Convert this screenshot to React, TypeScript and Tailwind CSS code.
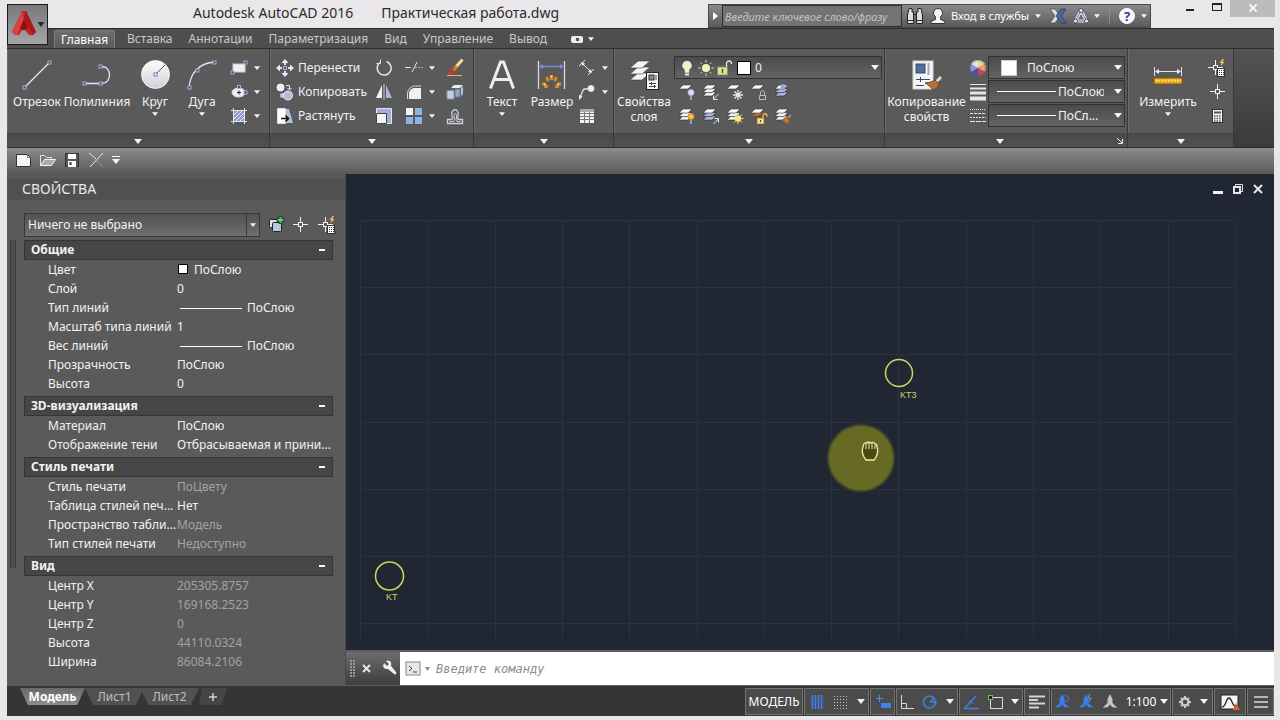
import React from 'react';

interface IIcon {
  w?: number;
  h?: number;
  children: React.ReactNode;
}

interface IRow {
  label: string;
  value: string;
  mark?: 'swatch' | 'line';
  muted?: boolean;
}

interface ISection {
  title: string;
  rows: IRow[];
}

const Icon = ({ w = 18, h = 18, children }: IIcon) => (
  <svg width={w} height={h} viewBox={`0 0 ${w} ${h}`} fill="none" stroke="#e6e6ea" className="shrink-0" aria-hidden="true">
    {children}
  </svg>
);

const Grip = ({ x, y }: { x: number; y: number }) => <rect x={x - 1.5} y={y - 1.5} width="3" height="3" fill="#4a4a55" stroke="#a9aee0" />;

const Arrow = ({ big = false }: { big?: boolean }) => (
  <svg width={big ? 8 : 6} height={big ? 5 : 4} viewBox="0 0 8 5" fill="#f4f4f4" className="shrink-0" aria-hidden="true">
    <path d="M0 0h8L4 5z" />
  </svg>
);

// stack of sheets shared by the layer tools
const Sheets = ({ n = 3, tint = '#f2f2f2' }: { n?: number; tint?: string }) => (
  <g stroke="#2c2c2c" strokeWidth="0.6">
    {n > 2 && <path d="M1 13l4-4h9l-4 4z" fill={tint} />}
    {n > 1 && <path d="M1 9.500l4-4h9l-4 4z" fill={tint} />}
    <path d="M1 6l4-4h9l-4 4z" fill="#fafafa" />
  </g>
);

const Cross = ({ x = 8, y = 8, r = 7 }: { x?: number; y?: number; r?: number }) => (
  <g stroke="#f2f2f2">
    <path d={`M${x + 0.5} ${y - r}v${r - 2}M${x + 0.5} ${y + 3}v${r - 2}M${x - r} ${y + 0.5}h${r - 2}M${x + 3} ${y + 0.5}h${r - 2}`} />
    <rect x={x - 1.5} y={y - 1.5} width="4" height="4" />
  </g>
);

const CrossCalc = () => (
  <Icon>
    <Cross x={7} y={8} r={7} />
    <path d="M14.500 0l-3 4h2l-1 3.500 4-4.500h-2l1.500-3z" fill="#f0c040" stroke="none" />
    <rect x="9.500" y="9.500" width="7" height="8" fill="#fff" stroke="#333" />
    <path d="M11 11.500h1M13 11.500h1M15 11.500h1M11 13.500h1M13 13.500h1M15 13.500h1M11 15.500h1M13 15.500h1M15 15.500h1" stroke="#333" />
  </Icon>
);

const LineIcon = () => (
  <Icon w={32} h={32}>
    <path d="M4 28L28 4" strokeWidth="1.300" />
    <Grip x={3.5} y={28.5} />
    <Grip x={28.5} y={3.5} />
  </Icon>
);

const PolylineIcon = () => (
  <Icon w={32} h={32}>
    <path d="M3 24.500h18c10 0 10-17 0-17h-2" strokeWidth="1.300" />
    <Grip x={3.5} y={24.5} />
    <Grip x={19.5} y={24.5} />
    <Grip x={19.5} y={7.5} />
  </Icon>
);

const CircleIcon = () => (
  <Icon w={32} h={32}>
    <defs>
      <linearGradient id="ball" x1="0" y1="0" x2="0" y2="1">
        <stop offset="0" stopColor="#fdfdfd" />
        <stop offset="1" stopColor="#cfd0d8" />
      </linearGradient>
    </defs>
    <circle cx="16.500" cy="15.500" r="14" fill="url(#ball)" stroke="#fff" strokeWidth="0.800" />
    <path d="M16 16L26 6" stroke="#555" />
    <rect x="15" y="14" width="3" height="3" fill="#fff" stroke="#6a78c0" />
  </Icon>
);

const ArcIcon = () => (
  <Icon w={32} h={32}>
    <path d="M3 29C4 14 13 4 29 3" strokeWidth="1.300" />
    <Grip x={3.5} y={28.5} />
    <Grip x={11.5} y={11.5} />
    <Grip x={28.5} y={3.5} />
  </Icon>
);

const RectIcon = () => (
  <Icon>
    <rect x="3" y="5" width="12" height="8" fill="#f0f0f2" stroke="#ccc" />
    <Grip x={2.5} y={13.5} />
    <Grip x={15.5} y={3.5} />
  </Icon>
);

const EllipseIcon = () => (
  <Icon>
    <ellipse cx="8.500" cy="9.500" rx="6.500" ry="4.500" fill="#eeeef2" stroke="#ddd" />
    <path d="M7 9.500h4M9 7.500v4" stroke="#222" />
    <Grip x={9} y={4} />
    <Grip x={15.5} y={9.5} />
  </Icon>
);

const HatchIcon = () => (
  <Icon>
    <rect x="4" y="4" width="10" height="10" fill="#8f9ad0" stroke="none" />
    <path d="M4 8l4-4M4 12l8-8M6 14l8-8M10 14l4-4" stroke="#e8ebff" />
    <path d="M3.500 1v16M14.500 1v16M1 3.500h16M1 14.500h16" />
  </Icon>
);

const MoveIcon = () => (
  <Icon>
    <path d="M9 0l3.500 4h-7zM9 18l3.500-4h-7zM0 9l4-3.500v7zM18 9l-4-3.500v7z" fill="#eee" stroke="none" />
    <path d="M9 3v3M9 12v3M3 9h3M12 9h3" strokeWidth="2" />
    <rect x="7.500" y="7.500" width="3" height="3" stroke="#a9aee0" />
  </Icon>
);

const CopyIcon = () => (
  <Icon>
    <circle cx="4.500" cy="4.500" r="3.500" fill="#eee" stroke="#fff" />
    <circle cx="6.500" cy="12.500" r="2.500" fill="#bfc4dd" stroke="none" />
    <circle cx="12" cy="12.500" r="4.500" fill="#b4bad8" stroke="#eee" />
    <path d="M10 2.500h3.500V6M11.500 5l2 2 2-2" />
  </Icon>
);

const StretchIcon = () => (
  <Icon>
    <path d="M1.500 1.500h8v15h-8z" fill="#fff" stroke="#ddd" />
    <path d="M10 2h3l4 14h-7z" fill="#a8c0dd" stroke="none" />
    <path d="M5 11.500h7M9.500 8.500l3 3-3 3" stroke="#111" strokeWidth="1.600" />
  </Icon>
);

const RotateIcon = () => (
  <Icon>
    <path d="M5 3.500a7 7 0 1 0 6.500-1" strokeWidth="1.500" />
    <path d="M5.500 0.500v4h-4" />
  </Icon>
);

const TrimIcon = () => (
  <Icon>
    <path d="M0 8.500h6M7 13l5-10" />
    <path d="M10 8.500h8" strokeDasharray="2 1" stroke="#aaa" />
  </Icon>
);

const EraseIcon = () => (
  <Icon>
    <path d="M16.500 0.500l-7 8" stroke="#f3dc8e" strokeWidth="3" />
    <path d="M9.500 6.500l3 2-4 4-3-2z" fill="#d9772b" stroke="none" />
    <path d="M6 9.500l3 3L4 15.500H1z" fill="#c83a2a" stroke="none" />
    <path d="M1 16.500h15" stroke="#f0b070" />
  </Icon>
);

const MirrorIcon = () => (
  <Icon>
    <path d="M7 2v13H1z" fill="#f2f2f2" stroke="none" />
    <path d="M11 2v13h6z" fill="#a9b8d4" stroke="none" />
    <path d="M9 1v16" stroke="#cfcfcf" />
  </Icon>
);

const FilletIcon = () => (
  <Icon>
    <path d="M4 16V11c0-4 3-6 6-6h6v11z" fill="#f0f0f2" stroke="none" />
    <path d="M2.500 16V11c0-5 4-8 8-8H16" stroke="#d8d8e0" />
  </Icon>
);

const ExplodeIcon = () => (
  <Icon>
    <path d="M5 5l3-3h9l-3 3z" fill="#e8eef6" stroke="none" />
    <path d="M1 7.500h7V16H1z" fill="#c2d0e4" stroke="#8090a8" />
    <path d="M9 6h5v8H9z" fill="#8fa6c8" stroke="#68788f" />
    <path d="M15 5l2-2v8l-2 2z" fill="#b4c4dc" stroke="none" />
  </Icon>
);

const ScaleIcon = () => (
  <Icon>
    <path d="M1.500 1.500h15v15h-15z" fill="#9fb0d2" stroke="#dfe4f0" />
    <path d="M1.500 6.500h10v10h-10z" fill="#f4f4f6" stroke="#444" />
  </Icon>
);

const ArrayIcon = () => (
  <Icon>
    <rect x="1" y="1" width="7" height="7" fill="#f4f4f6" stroke="none" />
    <rect x="10" y="1" width="7" height="7" fill="#8fb4e2" stroke="none" />
    <rect x="1" y="10" width="7" height="7" fill="#8fb4e2" stroke="none" />
    <rect x="10" y="10" width="7" height="7" fill="#8fb4e2" stroke="none" />
  </Icon>
);

const OffsetIcon = () => (
  <Icon>
    <path d="M1.500 16.500v-4h3.500c2 0 1.500-2 1-3-2-9 8-9 6 0-.5 1-1 3 1 3h3.500v4z" stroke="#c8d0e8" strokeWidth="1.300" />
    <path d="M3.500 14.500h4c2-2 0-4 .5-6.500.5-2 2-2 2.500 0 .5 2.500-1.500 4.500.5 6.500h3.500" stroke="#eee" strokeWidth="0.800" />
  </Icon>
);

const TextIcon = () => (
  <Icon w={30} h={32}>
    <path d="M3.500 29.500L13.500 3h3L26.500 29.500M7 20.500h16" stroke="#ededed" strokeWidth="3" />
  </Icon>
);

const DimensionIcon = () => (
  <Icon w={30} h={32}>
    <path d="M1.500 2v28M27.500 2v28" stroke="#d6d6dc" strokeWidth="1.300" />
    <path d="M3 7.500h23" stroke="#6f8fe0" strokeWidth="1.500" />
    <path d="M2 7.500l4-2.500v5zM27 7.500L23 5v5z" fill="#6f8fe0" stroke="none" />
    <path d="M14.500 16v5M9.500 18l2 4M19.500 18l-2 4M5 24.500l4 1M24 24.500l-4 1M7 27.500h4M18 27.500h4" stroke="#d98a26" strokeWidth="3" />
    <path d="M13.500 17.500h2M7 25.500h2M20 25.500h2" stroke="#ffe08a" strokeWidth="1.500" />
  </Icon>
);

const LinearIcon = () => (
  <Icon>
    <path d="M1 7l6-6M10 16l6-6M4 4l9 9" />
    <path d="M3 3l4 1.500L4.500 7zM14 14l-4-1 2.500-3z" fill="#eee" stroke="none" />
  </Icon>
);

const LeaderIcon = () => (
  <Icon>
    <path d="M2 15c1-2 2-7 4-9h6" strokeWidth="1.300" />
    <circle cx="13" cy="5.500" r="3" fill="#f2f2f2" />
    <path d="M1 17l0-5 3.500 1.500z" fill="#eee" stroke="none" />
  </Icon>
);

const TableIcon = () => (
  <Icon>
    <path d="M2 2h14v14H2z" fill="#f2f2f2" stroke="none" />
    <path d="M2 3.500h14" stroke="#aaa" strokeWidth="3" />
    <path d="M2 6.500h14M2 9.500h14M2 12.500h14M6.500 5v11M11.500 5v11" stroke="#777" />
  </Icon>
);

const LayerPropsIcon = () => (
  <Icon w={32} h={32}>
    <g fill="#f4f4f4" stroke="#333" strokeWidth="0.600">
      <path d="M2 21l8-7h12l-8 7z" />
      <path d="M2 15l8-7h12l-8 7z" />
      <path d="M2 9l8-7h12l-8 7z" />
    </g>
    <rect x="18.500" y="13.500" width="12" height="17" fill="#f4f4f4" stroke="#222" />
    <rect x="21" y="16" width="5" height="5" fill="#888" stroke="#333" />
    <path d="M28 16v5M21 24.500h7M21 27.500h7M23.500 23v3M26.500 26v3" stroke="#444" />
  </Icon>
);

const LayerToolIcon = ({ kind }: { kind: number }) => (
  <Icon>
    {[0, 2, 3, 8].includes(kind) && <Sheets n={1} />}
    {[1, 5, 7, 9].includes(kind) && <Sheets />}
    {[4, 6].includes(kind) && <Sheets tint="#aeb6e0" />}
    {kind === 0 && (
      <g fill="#d8dff4" stroke="#aeb6cc">
        <path d="M13 12v5" stroke="#e6e6ea" />
        <circle cx="13" cy="9.500" r="3" />
      </g>
    )}
    {kind === 1 && <path d="M16.500 11l-5 5M11.500 12.500v4h4" />}
    {kind === 2 && <path d="M12 7v10M7 12h10M8.500 8.500l7 7M15.500 8.500l-7 7" strokeWidth="1.300" />}
    {kind === 3 && <path d="M10.500 12v-2c0-3 4-3 4 0v2M9.500 12.500h6v4h-6z" stroke="#bbb" />}
    {kind === 4 && <circle cx="9" cy="3.500" r="2.500" fill="#9aa3d8" stroke="none" />}
    {kind === 5 && (
      <g fill="#f6bc50" stroke="#c8862a">
        <path d="M13 12v5" stroke="#e6e6ea" />
        <circle cx="13" cy="9.500" r="3" />
      </g>
    )}
    {kind === 6 && <path d="M11.500 17l5-5M12.500 11.500h4v4" />}
    {kind === 7 && (
      <g stroke="#f6e36a">
        <path d="M12 6v11M6.500 11.500h11M8 7.500l8 8M16 7.500l-8 8" />
        <circle cx="12" cy="11.500" r="3.200" fill="#f6e88a" stroke="none" />
      </g>
    )}
    {kind === 8 && (
      <g stroke="#f0b040">
        <path d="M2 9l4-3h6l-4 3z" fill="#b56a24" stroke="none" />
        <path d="M13 11V9c0-3 4-3 4 0v1" strokeWidth="1.300" />
        <rect x="7.500" y="11.500" width="6" height="5" fill="#f7dc90" />
        <path d="M10.500 13v2" stroke="#444" />
      </g>
    )}
    {kind === 9 && (
      <g stroke="#7a4418" strokeWidth="0.500">
        <path d="M8 13l4-3 4 4-3 3z" fill="#c87530" />
        <path d="M14 11l3-3" stroke="#d89050" strokeWidth="1.500" />
      </g>
    )}
  </Icon>
);

const MatchIcon = () => (
  <Icon w={32} h={32}>
    <rect x="2" y="2" width="20" height="28" fill="#f5f5f7" stroke="#cfd4dc" />
    <rect x="5" y="5" width="9" height="9" fill="#4f7096" stroke="#2d4a70" />
    <path d="M17.500 4v12" stroke="#9ab" strokeWidth="2" />
    <path d="M5 20.500h14M9.500 18v5M5 26.500h8" stroke="#2d4a70" />
    <path d="M30 18l-5 5" stroke="#d8d8d8" strokeWidth="3" />
    <path d="M14 24l6-1 4-2 4 4-2 4-4 2c-2-3-5-5-8-7z" fill="#b5713a" stroke="#7a4418" />
  </Icon>
);

const WheelIcon = () => (
  <Icon>
    <path d="M9 9L9 1a8 8 0 0 1 7 4z" fill="#e8d890" stroke="none" />
    <path d="M9 9l7-4a8 8 0 0 1 0 8z" fill="#e8a070" stroke="none" />
    <path d="M9 9l7 4a8 8 0 0 1-7 4z" fill="#c8405a" stroke="none" />
    <path d="M9 9v8a8 8 0 0 1-7-4z" fill="#4a4ab0" stroke="none" />
    <path d="M9 9l-7 4a8 8 0 0 1 0-8z" fill="#8a9ad8" stroke="none" />
    <path d="M9 9L2 5a8 8 0 0 1 7-4z" fill="#e4e4d8" stroke="none" />
    <circle cx="9" cy="9" r="7.500" stroke="#666" strokeWidth="0.500" />
  </Icon>
);

const WeightIcon = () => (
  <Icon>
    <path d="M1 1.500h16" />
    <path d="M1 5.500h16" strokeWidth="2" />
    <path d="M1 10h16" strokeWidth="3" />
    <path d="M1 15.500h16" strokeWidth="4" />
  </Icon>
);

const DashIcon = () => (
  <Icon>
    <path d="M1 2.500h16" strokeDasharray="1 1" />
    <path d="M1 6.500h16" strokeDasharray="3 1" />
    <path d="M1 10.500h16" strokeDasharray="2 1" />
    <path d="M1 14.500h16" strokeDasharray="5 1" />
  </Icon>
);

const MeasureIcon = () => (
  <Icon w={32} h={32}>
    <path d="M2.500 8v9M29.500 8v9M4 12.500h24" />
    <path d="M3 12.500l4-2.500v5zM29 12.500L25 10v5z" fill="#eee" stroke="none" />
    <rect x="2" y="19" width="28" height="6" fill="#e8a818" stroke="#8a5a08" />
    <path d="M4 21.500h25" stroke="#ffe9a0" strokeWidth="2" strokeDasharray="1.500 1.500" />
  </Icon>
);

const CalcIcon = () => (
  <Icon>
    <rect x="4.500" y="2.500" width="10" height="13" fill="#f2f2f2" stroke="#333" />
    <path d="M6 5.500h7" stroke="#555" strokeWidth="2" />
    <path d="M6 9h7M6 11.500h7M6 14h7" stroke="#555" strokeWidth="1.500" strokeDasharray="1.500 1" />
  </Icon>
);

const BigTool = ({ icon, label, width, arrow }: { icon: React.ReactNode; label: string; width: string; arrow?: boolean }) => (
  <button type="button" className={`${width} flex h-full flex-col items-center`}>
    <span className="flex h-[38px] items-center">{icon}</span>
    <span className="whitespace-pre text-center text-[12px] leading-[15px]">{label}</span>
    {arrow && (
      <span className="mt-[3px]">
        <Arrow />
      </span>
    )}
  </button>
);

const SmallTool = ({ icon, name, label, arrow }: { icon: React.ReactNode; name: string; label?: string; arrow?: boolean }) => (
  <button type="button" aria-label={name} className="flex h-6 items-center text-[12px] leading-4">
    {icon}
    {label && <span className="ml-1">{label}</span>}
    {arrow && (
      <span className="ml-[6px]">
        <Arrow />
      </span>
    )}
  </button>
);

const Panel = ({ width, children, launcher }: { width: string; children: React.ReactNode; launcher?: boolean }) => (
  <section className={`${width} flex shrink-0 flex-col border-r border-[#3a393a] bg-[#5b5a5b] shadow-[inset_1px_0_0_#6b6a6b]`}>
    <div className="flex h-[84px] pt-[7px]">{children}</div>
    <button type="button" aria-label="Развернуть панель" className="flex h-[14px] items-center justify-center bg-gradient-to-b from-[#4a494a] to-[#525152] pt-[2px]">
      <span className={launcher ? 'ml-auto' : ''}>
        <Arrow big />
      </span>
      {launcher && (
        <svg width="6" height="6" viewBox="0 0 6 6" fill="none" stroke="#eee" className="mr-1 ml-[113px]" aria-hidden="true">
          <path d="M0 0l5 5M5.500 1v4.500H1" />
        </svg>
      )}
    </button>
  </section>
);

const Combo = ({ label, value, className, children }: { label: string; value: string; className: string; children?: React.ReactNode }) => (
  <div className="relative h-[23px] border border-[#333] bg-gradient-to-b from-[#4c4b4c] to-[#656465]">
    <span className="pointer-events-none absolute inset-y-0 left-1 flex items-center">{children}</span>
    <select aria-label={label} defaultValue={value} className={`${className} block h-full w-full appearance-none bg-transparent text-[12px] outline-none`}>
      <option>{value}</option>
    </select>
    <span className="pointer-events-none absolute inset-y-0 right-[2px] flex items-center">
      <Arrow big />
    </span>
  </div>
);

const TABS = ['Вставка', 'Аннотации', 'Параметризация', 'Вид', 'Управление', 'Вывод'];

const SECTIONS: ISection[] = [
  {
    title: 'Общие',
    rows: [
      { label: 'Цвет', value: 'ПоСлою', mark: 'swatch' },
      { label: 'Слой', value: '0' },
      { label: 'Тип линий', value: 'ПоСлою', mark: 'line' },
      { label: 'Масштаб типа линий', value: '1' },
      { label: 'Вес линий', value: 'ПоСлою', mark: 'line' },
      { label: 'Прозрачность', value: 'ПоСлою' },
      { label: 'Высота', value: '0' },
    ],
  },
  {
    title: '3D-визуализация',
    rows: [
      { label: 'Материал', value: 'ПоСлою' },
      { label: 'Отображение тени', value: 'Отбрасываемая и прини...' },
    ],
  },
  {
    title: 'Стиль печати',
    rows: [
      { label: 'Стиль печати', value: 'ПоЦвету', muted: true },
      { label: 'Таблица стилей печ...', value: 'Нет' },
      { label: 'Пространство табли...', value: 'Модель', muted: true },
      { label: 'Тип стилей печати', value: 'Недоступно', muted: true },
    ],
  },
  {
    title: 'Вид',
    rows: [
      { label: 'Центр X', value: '205305.8757', muted: true },
      { label: 'Центр Y', value: '169168.2523', muted: true },
      { label: 'Центр Z', value: '0', muted: true },
      { label: 'Высота', value: '44110.0324', muted: true },
      { label: 'Ширина', value: '86084.2106', muted: true },
    ],
  },
];

const TitleBar = () => (
  <header className="flex h-7 shrink-0 items-start pl-[193px] text-[#2b2b2b]">
    <h1 className="flex gap-7 whitespace-nowrap text-[14px] leading-[26px]">
      <span>Autodesk AutoCAD 2016</span>
      <span>Практическая работа.dwg</span>
    </h1>
    <div className="mt-1 ml-auto flex h-6 w-[443px] items-center border border-[#4a494a] bg-gradient-to-b from-[#8b8a8b] to-[#5c5b5c] text-white">
      <button type="button" aria-label="Свернуть поиск" className="flex h-full w-[13px] items-center justify-center">
        <svg width="5" height="8" viewBox="0 0 5 8" fill="#fff">
          <path d="M0 0l5 4-5 4z" />
        </svg>
      </button>
      <input
        aria-label="Поиск"
        placeholder="Введите ключевое слово/фразу"
        className="h-[22px] w-[180px] shrink-0 border border-[#2f2e2f] bg-[#757273] px-[2px] text-[11px] italic outline-none placeholder:text-[#c4c2c3]"
      />
      <button type="button" aria-label="Найти" className="ml-1">
        <Icon>
          <path d="M3 1.500h3V5h1.500v11.500h-6V8zM12 1.500h3L16.500 8v8.500h-6V5H12zM7 7.500h4" fill="#ddd" stroke="#222" />
          <path d="M2 13.500h5M11 13.500h5" stroke="#333" />
        </Icon>
      </button>
      <button type="button" className="ml-[5px] flex items-center text-[11px]">
        <Icon>
          <circle cx="9" cy="6" r="4.500" fill="#f4f4f4" stroke="#333" />
          <path d="M7 10h4v2l5 2.500v2H2v-2L7 12z" fill="#f4f4f4" stroke="#333" />
          <rect x="7" y="8" width="4" height="4" fill="#f4f4f4" stroke="none" />
        </Icon>
        <span className="ml-1 w-[84px] text-left whitespace-nowrap">Вход в службы</span>
        <Arrow />
      </button>
      <button type="button" aria-label="Autodesk Exchange" className="ml-2">
        <Icon>
          <path d="M1 2h5l5 7-5 7H1l5-7z" fill="#dcdce2" stroke="#444" strokeWidth="0.700" />
          <path d="M17 2h-5L7 9l5 7h5l-5-7z" fill="#5262a8" stroke="#26305c" strokeWidth="0.700" />
        </Icon>
      </button>
      <button type="button" aria-label="A360" className="ml-[5px] flex items-center gap-1">
        <Icon>
          <path d="M9 3.500L3.500 14h11z" stroke="#dfe2f2" strokeWidth="3" />
          <path d="M9 3.500L3.500 14h11z" stroke="#4c5590" strokeWidth="0.800" />
          <circle cx="9" cy="3.500" r="2" fill="#eceef8" stroke="#445" />
          <circle cx="3.500" cy="14" r="2" fill="#eceef8" stroke="#445" />
          <circle cx="14.500" cy="14" r="2" fill="#eceef8" stroke="#445" />
        </Icon>
        <Arrow />
      </button>
      <span className="ml-[9px] h-4 w-px bg-[#8d8c8d]" />
      <button type="button" aria-label="Справка" className="ml-[9px] flex items-center gap-[6px]">
        <span className="flex size-4 items-center justify-center rounded-full border border-white bg-[#f4f5fa] text-[13px] leading-4 font-bold text-[#36407c]">?</span>
        <Arrow />
      </button>
    </div>
    <div className="mr-[5px] ml-[26px] flex h-[17px]">
      <button type="button" aria-label="Свернуть" className="flex w-[26px] items-end justify-center pb-[6px]">
        <span className="h-[2px] w-2 bg-[#222]" />
      </button>
      <button type="button" aria-label="Развернуть" className="flex w-[27px] items-center justify-center pb-1">
        <span className="h-2 w-[10px] border border-t-2 border-[#222]" />
      </button>
      <button type="button" aria-label="Закрыть" className="flex w-[45px] items-center justify-center bg-[#bdbcbd] pb-[2px]">
        <svg width="8" height="8" viewBox="0 0 8 8" stroke="#fff" strokeWidth="1.600">
          <path d="M0.500 0.500l7 7M7.500 0.500l-7 7" />
        </svg>
      </button>
    </div>
  </header>
);

const RibbonTabs = () => (
  <nav className="relative flex h-[21px] shrink-0 items-end border-y border-[#2d2c2d] bg-[#4f4e4f] pl-[47px] text-[12px] leading-4 text-[#c9c8c9]">
    <button
      type="button"
      aria-label="Меню приложения"
      className="absolute bottom-[3px] left-0 flex h-[41px] w-[41px] items-center gap-px border border-[#1c1b1c] bg-gradient-to-b from-[#77797a] to-[#a5a6a7] pl-1"
    >
      <svg width="24" height="28" viewBox="0 0 24 28" className="mb-1 shrink-0">
        <path d="M10 2h4l10 21-3 3h-4l-4-5h-3l-3 5H3l-3-3z" fill="#c8242a" />
        <path d="M10 2l-10 21 3 3h2l7-14z" fill="#dc4042" />
        <path d="M12 10l4 9-3 2h-3l-2-2z" fill="#8c1216" />
        <path d="M14 2l10 21-3 3-6-10-3-8z" fill="#ab181e" />
      </svg>
      <svg width="8" height="5" viewBox="0 0 7 5" fill="#2a2a2a" className="shrink-0">
        <path d="M0 0h7L3.500 5z" />
      </svg>
    </button>
    <button type="button" className="h-[18px] w-[61px] rounded-t-xs border border-b-0 border-[#7c7b7c] bg-gradient-to-b from-[#6f6e6f] to-[#5b5a5b] whitespace-nowrap text-white">
      Главная
    </button>
    <div className="ml-3 flex h-[18px] items-center gap-4 whitespace-nowrap">
      {TABS.map((tab) => (
        <button type="button" key={tab}>
          {tab}
        </button>
      ))}
    </div>
    <button type="button" aria-label="Вид ленты" className="ml-6 flex h-[18px] items-center gap-[5px]">
      <span className="flex h-[7px] w-3 items-center justify-center rounded-xs bg-[#ececec]">
        <span className="size-[3px] bg-[#555]" />
      </span>
      <Arrow />
    </button>
  </nav>
);

const Ribbon = () => (
  <div className="flex h-[99px] shrink-0 border-b border-[#2d2c2d] bg-gradient-to-b from-[#555455] to-[#3c3b3c]">
    <Panel width="w-[263px]">
      <div className="ml-[5px] flex">
        <BigTool width="w-[50px]" label="Отрезок" icon={<LineIcon />} />
        <BigTool width="w-[70px]" label="Полилиния" icon={<PolylineIcon />} />
        <BigTool width="w-[46px]" label="Круг" icon={<CircleIcon />} arrow />
        <BigTool width="w-[48px]" label="Дуга" icon={<ArcIcon />} arrow />
      </div>
      <div className="ml-1">
        <SmallTool name="Прямоугольник" icon={<RectIcon />} arrow />
        <SmallTool name="Эллипс" icon={<EllipseIcon />} arrow />
        <SmallTool name="Штриховка" icon={<HatchIcon />} arrow />
      </div>
    </Panel>
    <Panel width="w-[204px]">
      <div className="ml-[6px] w-[99px]">
        <SmallTool name="Перенести" label="Перенести" icon={<MoveIcon />} />
        <SmallTool name="Копировать" label="Копировать" icon={<CopyIcon />} />
        <SmallTool name="Растянуть" label="Растянуть" icon={<StretchIcon />} />
      </div>
      <div className="w-[30px]">
        <SmallTool name="Повернуть" icon={<RotateIcon />} />
        <SmallTool name="Зеркало" icon={<MirrorIcon />} />
        <SmallTool name="Масштаб" icon={<ScaleIcon />} />
      </div>
      <div className="w-[41px]">
        <SmallTool name="Обрезать" icon={<TrimIcon />} arrow />
        <SmallTool name="Сопряжение" icon={<FilletIcon />} arrow />
        <SmallTool name="Массив" icon={<ArrayIcon />} arrow />
      </div>
      <div>
        <SmallTool name="Стереть" icon={<EraseIcon />} />
        <SmallTool name="Расчленить" icon={<ExplodeIcon />} />
        <SmallTool name="Подобие" icon={<OffsetIcon />} />
      </div>
    </Panel>
    <Panel width="w-[140px]">
      <BigTool width="w-[56px]" label="Текст" icon={<TextIcon />} arrow />
      <BigTool width="w-[44px]" label="Размер" icon={<DimensionIcon />} />
      <div className="ml-1">
        <SmallTool name="Линейный" icon={<LinearIcon />} arrow />
        <SmallTool name="Выноска" icon={<LeaderIcon />} arrow />
        <SmallTool name="Таблица" icon={<TableIcon />} />
      </div>
    </Panel>
    <Panel width="w-[271px]">
      <BigTool width="w-[60px]" label={'Свойства\nслоя'} icon={<LayerPropsIcon />} />
      <div className="w-[208px]">
        <Combo label="Слой" value="0" className="pl-[80px]">
          <Icon>
            <path d="M8 2a4.500 4.500 0 0 0-2 8.500v3h4v-3A4.500 4.500 0 0 0 8 2z" fill="#f4f2c0" stroke="#ddd" strokeWidth="0.600" />
            <path d="M6 15.500h4" strokeWidth="2" />
          </Icon>
          <Icon w={20}>
            <circle cx="9" cy="9" r="4" fill="#f4f2c0" stroke="none" />
            <path d="M9 1v2.500M9 14.500V17M1 9h2.500M14.500 9H17M3.500 3.500L5 5M13 13l1.500 1.500M3.500 14.500L5 13M13 5l1.500-1.500" stroke="#d8d8c8" />
          </Icon>
          <Icon>
            <path d="M9.500 8V5c0-4 5-4 5 0" strokeWidth="1.300" />
            <rect x="0.500" y="8" width="10" height="8" fill="#dfe48c" stroke="#888" />
            <path d="M5.500 10v4" stroke="#444" strokeWidth="1.500" />
          </Icon>
          <span className="ml-[2px] size-[14px] border border-black bg-white" />
        </Combo>
        <div className="mt-[1px] ml-1 grid w-[120px] grid-cols-5">
          {[0, 1, 2, 3, 4, 5, 6, 7, 8, 9].map((kind) => (
            <SmallTool key={kind} name={`Слой ${kind}`} icon={<LayerToolIcon kind={kind} />} />
          ))}
        </div>
      </div>
    </Panel>
    <Panel width="w-[243px]" launcher>
      <BigTool width="w-[83px]" label={'Копирование\nсвойств'} icon={<MatchIcon />} />
      <div className="mr-[1px] ml-[1px]">
        <SmallTool name="Цвет объекта" icon={<WheelIcon />} />
        <SmallTool name="Вес линий" icon={<WeightIcon />} />
        <SmallTool name="Тип линий" icon={<DashIcon />} />
      </div>
      <div className="flex w-[137px] flex-col gap-px">
        <Combo label="Цвет" value="ПоСлою" className="pl-[38px]">
          <span className="ml-[8px] size-4 border border-[#ccc] bg-white" />
        </Combo>
        <Combo label="Вес" value="ПоСлою" className="pr-5 pl-[69px]">
          <span className="ml-1 h-px w-[59px] bg-white" />
        </Combo>
        <Combo label="Тип" value="ПоСл..." className="pl-[69px]">
          <span className="ml-1 h-px w-[59px] bg-white" />
        </Combo>
      </div>
    </Panel>
    <Panel width="w-[106px]">
      <BigTool width="w-[80px]" label="Измерить" icon={<MeasureIcon />} arrow />
      <div>
        <SmallTool name="Быстрый выбор" icon={<CrossCalc />} />
        <SmallTool
          name="Точка"
          icon={
            <Icon>
              <Cross x={9} y={8} r={7} />
            </Icon>
          }
        />
        <SmallTool name="Калькулятор" icon={<CalcIcon />} />
      </div>
    </Panel>
  </div>
);

const QuickAccess = () => (
  <div className="flex h-[26px] shrink-0 items-center bg-gradient-to-b from-[#8d8c8d] to-[#5a595a] pb-[2px] pl-2">
    <button type="button" aria-label="Создать" className="w-6">
      <Icon>
        <path d="M1.500 3.500h11l3 3v9h-14z" fill="#f4f4f4" stroke="#333" />
        <path d="M12.500 3.500v3h3" stroke="#777" />
      </Icon>
    </button>
    <button type="button" aria-label="Открыть" className="w-6">
      <Icon>
        <path d="M1.500 14.500v-10h4l2 2h5v3" fill="#777" />
        <path d="M1.500 14.500l4-6h11l-4 6z" fill="#aaa" stroke="#f4f4f4" />
      </Icon>
    </button>
    <button type="button" aria-label="Сохранить" className="w-6">
      <Icon>
        <path d="M2.500 2.500h13v13h-13z" fill="#55565e" stroke="#2f2f38" />
        <rect x="5" y="3" width="8" height="5" fill="#fff" stroke="none" />
        <rect x="5" y="10" width="8" height="6" fill="#fff" stroke="none" />
        <path d="M7.500 11v3" stroke="#333" strokeWidth="2" />
      </Icon>
    </button>
    <button type="button" aria-label="Обрезать" className="w-6">
      <Icon>
        <path d="M2 2l7 6M16 2L3 16" />
        <path d="M10 10l6 6" stroke="#aaa" strokeDasharray="2 1" />
      </Icon>
    </button>
    <button type="button" aria-label="Настройка панели" className="ml-px flex flex-col items-center gap-[2px]">
      <span className="h-px w-2 bg-white" />
      <Arrow big />
    </button>
  </div>
);

const Properties = () => (
  <aside className="flex w-[339px] shrink-0 flex-col border-r border-[#4a494a] bg-[#5b5a5b] text-[12px] text-[#f2f2f2]">
    <h2 className="mt-1 h-[22px] bg-[#525152] pl-[15px] text-[14px] leading-[22px] text-[#e8e8e8]">СВОЙСТВА</h2>
    <div className="mt-[13px] flex h-6 items-center pl-[17px]">
      <div className="relative h-6 w-[236px] border border-[#3a393a] bg-gradient-to-b from-[#545354] to-[#6f6e6f]">
        <select aria-label="Выбранные объекты" className="block h-full w-full appearance-none bg-transparent pl-[3px] text-[12px] outline-none">
          <option>Ничего не выбрано</option>
        </select>
        <span className="pointer-events-none absolute inset-y-0 right-0 flex w-[13px] items-center justify-center border-l border-[#3a393a]">
          <Arrow />
        </span>
      </div>
      <button type="button" aria-label="Добавление к набору" className="ml-2">
        <Icon>
          <rect x="1.500" y="3.500" width="9" height="8" rx="1" fill="#dbe4f0" stroke="#222" />
          <rect x="4.500" y="6.500" width="9" height="9" rx="1" fill="#b8c8e0" stroke="#222" />
          <path d="M12.500 0v8M8.500 4h8" stroke="#1e4a2c" strokeWidth="4" />
          <path d="M12.500 1v6M9.500 4h6" stroke="#62c080" strokeWidth="2" />
        </Icon>
      </button>
      <button type="button" aria-label="Выбрать объекты" className="ml-[6px]">
        <Icon>
          <Cross />
        </Icon>
      </button>
      <button type="button" aria-label="Быстрый выбор" className="ml-2">
        <CrossCalc />
      </button>
    </div>
    <div className="mt-[3px] flex">
      <div className="mr-2 ml-[3px] h-[328px] w-[6px] border-x border-[#403f40] bg-[#4e4d4e]" />
      <div className="flex w-[309px] flex-col gap-[3px]">
        {SECTIONS.map((section) => (
          <section key={section.title}>
            <h3 className="flex h-5 items-center justify-between border border-[#363536] bg-[#474647] pr-[7px] pl-[6px] text-[12px] font-bold">
              {section.title}
              <span className="h-[2px] w-[6px] bg-white" />
            </h3>
            <table className="w-full table-fixed leading-[18px]">
              <tbody>
                {section.rows.map((row) => (
                  <tr key={row.label} className="h-[19px]">
                    <th scope="row" className="w-[153px] p-0 pl-6 text-left font-normal whitespace-pre">
                      {row.label}
                    </th>
                    <td className={`p-0 whitespace-pre ${row.muted ? 'text-[#a3a2a3]' : 'text-[#f2f2f2]'}`}>
                      {row.mark === 'swatch' && <span className="mr-[6px] ml-px inline-block size-[10px] border border-black bg-white" />}
                      {row.mark === 'line' && <span className="mr-[5px] ml-[3px] inline-block h-px w-[62px] bg-white align-middle" />}
                      {row.value}
                    </td>
                  </tr>
                ))}
              </tbody>
            </table>
          </section>
        ))}
      </div>
    </div>
  </aside>
);

const Drawing = () => (
  <div className="relative min-h-0 flex-1 overflow-hidden bg-[#202733]">
    <svg className="absolute inset-0 h-full w-full" fill="none">
      <defs>
        <filter id="soft" x="-20%" y="-20%" width="140%" height="140%">
          <feGaussianBlur stdDeviation="1.200" />
        </filter>
      </defs>
      <g stroke="#29323e">
        {[0, 1, 2, 3, 4, 5, 6, 7, 8, 9, 10, 11, 12, 13].map((i) => (
          <path key={i} d={`M${Math.round(14 + i * 67.3) + 0.5} 47v417`} />
        ))}
        {[0, 1, 2, 3, 4, 5, 6].map((i) => (
          <path key={i} d={`M14 ${Math.round(46 + i * 67.2) + 0.5}h876`} />
        ))}
      </g>
      <circle cx="43.500" cy="402" r="14" stroke="#c8d860" strokeWidth="1.500" />
      <circle cx="553" cy="199" r="13.500" stroke="#c8d860" strokeWidth="1.500" />
      <g fill="#c8d860" className="font-['Liberation_Sans'] text-[9px]">
        <text x="40" y="426">KT</text>
        <text x="554" y="224">KT3</text>
      </g>
      <circle cx="515" cy="284" r="33" fill="#666a22" filter="url(#soft)" />
      <path
        d="M519 269c-2 1-2 3-2 4-1 2-1 7 1 10l2 3h8l2-3c2-3 2-8 1-10 0-1 0-3-2-3-1-2-3-2-4-1-2-1-4-1-4 0z"
        fill="#4c4a10"
        stroke="#f0f0b0"
        strokeWidth="1.300"
      />
      <path d="M520 270v5M523 269v6M526 269v6M529 271v4" stroke="#f0f0b0" />
    </svg>
    <div className="absolute top-[9px] right-[10px] flex gap-[8px]">
      <button type="button" aria-label="Свернуть чертеж" className="flex h-3 w-3 items-end justify-center pb-px">
        <span className="h-[3px] w-[10px] bg-[#eef2f6]" />
      </button>
      <button type="button" aria-label="Восстановить чертеж">
        <Icon w={12} h={12}>
          <path d="M3.500 3V1.500h7v7H9" />
          <rect x="2" y="4" width="6" height="6" strokeWidth="2" />
        </Icon>
      </button>
      <button type="button" aria-label="Закрыть чертеж">
        <Icon w={12} h={12}>
          <path d="M2 2l8 8M10 2l-8 8" strokeWidth="2" />
        </Icon>
      </button>
    </div>
  </div>
);

const CommandLine = () => (
  <div className="flex h-9 shrink-0 border-t-2 border-b border-[#5f5e5f] bg-white">
    <div className="flex w-[54px] items-center bg-gradient-to-b from-[#6e6d6e] to-[#3e3d3e] pl-1">
      <svg width="5" height="18" viewBox="0 0 5 18" stroke="#999" strokeWidth="2" strokeDasharray="2 1">
        <path d="M1 0v18M4 0v18" />
      </svg>
      <button type="button" aria-label="Закрыть командную строку" className="ml-[6px]">
        <Icon w={12} h={12}>
          <path d="M2 2l7 7M9 2l-7 7" strokeWidth="2" />
        </Icon>
      </button>
      <button type="button" aria-label="Настройка" className="ml-2">
        <Icon w={16}>
          <path d="M3 3l3 3 2-2-3-3c4-1 6 1 5 5l5 6c1 2-1 3-2 2L7 9C3 9 1 7 3 3z" fill="#f2f2f2" stroke="none" />
        </Icon>
      </button>
    </div>
    <label htmlFor="command" className="flex items-center gap-1 pl-[5px]">
      <Icon w={16} h={16}>
        <rect x="1" y="1" width="14" height="13" fill="#e6e8ee" stroke="#888" />
        <path d="M4 5l3 2.500L4 10M8 11h4" stroke="#444" />
      </Icon>
      <svg width="5" height="4" viewBox="0 0 5 4" fill="#888">
        <path d="M0 0h5L2.500 4z" />
      </svg>
    </label>
    <input
      id="command"
      placeholder="Введите команду"
      className="ml-[6px] min-w-0 flex-1 bg-transparent font-['DejaVu_Sans_Mono',monospace] text-[12px] text-[#555] italic outline-none placeholder:text-[#8c8c8c]"
    />
  </div>
);

const Cell = ({ width, name, children }: { width: string; name: string; children: React.ReactNode }) => (
  <div role="group" aria-label={name} className={`${width} flex h-[27px] shrink-0 items-center justify-center border border-[#747374] bg-[#4c4b4c]`}>
    {children}
  </div>
);

const StatusIcon = ({ name, children, w = 16 }: { name: string; children: React.ReactNode; w?: number }) => (
  <button type="button" aria-label={name}>
    <Icon w={w} h={16}>
      {children}
    </Icon>
  </button>
);

const Compass = ({ color }: { color: string }) => <path d="M8 0l2.500 5v4l5 5-5.500-1-2-2.500L6 13l-5.500 1 5-5V5z" fill={color} stroke="none" />;

const StatusBar = () => (
  <footer className="flex h-[30px] shrink-0 items-start bg-[#363536] pl-[13px] text-[12px] text-white">
    <div className="mt-[2px] flex h-[17px] items-center text-[#c0bfc0]">
      <button type="button" className="h-full w-[65px] bg-gradient-to-b from-[#6a696a] to-[#8e8d8e] leading-4 font-bold text-white [clip-path:polygon(0_0,100%_0,88%_100%,12%_100%)]">
        Модель
      </button>
      <button type="button" className="h-full w-[59px] bg-[#525152] leading-4 [clip-path:polygon(0_0,100%_0,86%_100%,14%_100%)]">
        Лист1
      </button>
      <button type="button" className="-ml-1 h-full w-[59px] bg-[#525152] leading-4 [clip-path:polygon(0_0,100%_0,86%_100%,14%_100%)]">
        Лист2
      </button>
      <button type="button" aria-label="Новый лист" className="flex h-full w-7 items-center justify-center bg-[#464546] [clip-path:polygon(10%_0,100%_0,80%_100%,0_100%)]">
        <svg width="8" height="8" viewBox="0 0 8 8" stroke="#d0d0d0" strokeWidth="1.500">
          <path d="M4 0v8M0 4h8" />
        </svg>
      </button>
    </div>
    <div className="mt-[2px] ml-auto flex gap-px">
      <Cell width="w-[58px]" name="Пространство">
        <button type="button" className="text-[12px]">
          МОДЕЛЬ
        </button>
      </Cell>
      <Cell width="w-[65px] gap-[8px]" name="Сетка">
        <StatusIcon name="Отображение сетки">
          <path d="M3.500 1v14M6.500 1v14M9.500 1v14M12.500 1v14" stroke="#4a8cf0" strokeWidth="1.300" />
          <path d="M1 3.500h14M1 6.500h14M1 9.500h14M1 12.500h14" stroke="#3168c0" />
        </StatusIcon>
        <StatusIcon name="Шаг">
          <path d="M1 2.500h14M1 5.500h14M1 8.500h14M1 11.500h14M1 14.500h14" strokeDasharray="1 2" stroke="#c8c8c8" />
        </StatusIcon>
        <Arrow big />
      </Cell>
      <Cell width="w-[25px]" name="Ввод">
        <StatusIcon name="Динамический ввод">
          <path d="M4.500 1v7M1 4.500h7" stroke="#4a8cf0" />
          <rect x="6" y="9" width="10" height="5" fill="#3f82e8" stroke="none" />
        </StatusIcon>
      </Cell>
      <Cell width="w-[62px] gap-[8px]" name="Режимы">
        <StatusIcon name="Орто" w={14}>
          <path d="M1.500 1v13.500H14M1.500 9.500h5v5" stroke="#d8d8d8" />
        </StatusIcon>
        <StatusIcon name="Полярное отслеживание">
          <circle cx="7.500" cy="8" r="6" stroke="#3f82e8" strokeWidth="1.500" />
          <path d="M8 8h7M8 8l4-4" stroke="#3f82e8" strokeWidth="1.500" />
        </StatusIcon>
        <Arrow big />
      </Cell>
      <Cell width="w-[64px] gap-[8px]" name="Привязки">
        <StatusIcon name="Объектное отслеживание">
          <path d="M1 14.500h15M2 14L13 2" stroke="#3f82e8" strokeWidth="1.300" />
          <path d="M6 6l4 4M10 6l-4 4" stroke="#3f82e8" />
        </StatusIcon>
        <StatusIcon name="Объектная привязка">
          <rect x="3.500" y="3.500" width="12" height="11" stroke="#d8d8d8" />
          <rect x="1.500" y="1.500" width="4" height="4" fill="#222" stroke="#6fc050" />
        </StatusIcon>
        <Arrow big />
      </Cell>
      <Cell width="w-[26px]" name="Линии">
        <StatusIcon name="Вес линий">
          <path d="M0 2.500h16M0 6h9M0 9.500h16M0 13.500h10" stroke="#d4d4d4" strokeWidth="2" />
        </StatusIcon>
      </Cell>
      <Cell width="w-[120px] gap-[8px]" name="Аннотации">
        <StatusIcon name="Видимость аннотаций">
          <Compass color="#3a7ee6" />
          <circle cx="11.500" cy="4.500" r="3" stroke="#3a7ee6" />
        </StatusIcon>
        <StatusIcon name="Автомасштаб">
          <Compass color="#3a7ee6" />
          <path d="M12 0l-2 4h3l-2 4" stroke="#5f9cf4" />
        </StatusIcon>
        <StatusIcon name="Масштаб аннотаций">
          <Compass color="#c4c4c4" />
        </StatusIcon>
        <button type="button" className="flex items-center gap-1 text-[12px]">
          1:100 <Arrow big />
        </button>
      </Cell>
      <Cell width="w-[41px] gap-[8px]" name="Рабочее пространство">
        <StatusIcon name="Параметры" w={14}>
          <circle cx="7" cy="8" r="3.500" stroke="#c8c8c8" strokeWidth="2.500" />
          <path d="M7 2v2M7 12v2M1 8h2M11 8h2M3 4l1 1M10 11l1 1M3 12l1-1M10 5l1-1" stroke="#c8c8c8" strokeWidth="2" />
        </StatusIcon>
        <Arrow big />
      </Cell>
      <Cell width="w-[32px]" name="Графика">
        <StatusIcon name="Аппаратное ускорение" w={20}>
          <rect x="1" y="1" width="17" height="14" fill="#f4f4f4" stroke="#222" />
          <path d="M2 13C6 13 6 4 9 4s3 9 8 9" stroke="#222" strokeWidth="1.300" />
          <path d="M13 16l3-7 4 7z" fill="#d8622a" stroke="none" />
        </StatusIcon>
      </Cell>
      <Cell width="w-[27px]" name="Меню">
        <StatusIcon name="Адаптация">
          <path d="M1 3h14M1 8h14M1 13h14" stroke="#dcdcdc" strokeWidth="1.600" />
        </StatusIcon>
      </Cell>
    </div>
  </footer>
);

const App = () => (
  <main className="flex h-screen w-full flex-col overflow-hidden bg-[#e9e7e9] pb-1 font-['Noto_Sans','Open_Sans',sans-serif]">
    <TitleBar />
    <div className="mr-[6px] ml-[7px] flex min-h-0 flex-1 flex-col text-[#f2f2f2]">
      <RibbonTabs />
      <Ribbon />
      <QuickAccess />
      <div className="flex min-h-0 flex-1">
        <Properties />
        <div className="flex min-w-0 flex-1 flex-col">
          <Drawing />
          <CommandLine />
        </div>
      </div>
      <StatusBar />
    </div>
  </main>
);

export default App;
